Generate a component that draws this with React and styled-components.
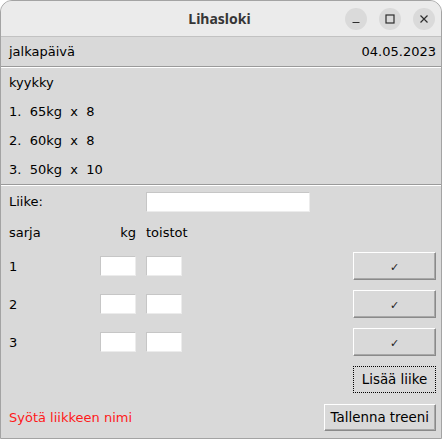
import React from "react";
import styled, { createGlobalStyle } from "styled-components";

const GlobalStyle = createGlobalStyle`
  html, body { margin: 0; padding: 0; background: #ffffff; }
  body { font-family: "DejaVu Sans", "Liberation Sans", sans-serif; }
  * { box-sizing: border-box; }
`;

const Window = styled.div`
  width: 442px;
  height: 439px;
  border: 1px solid #a3a3a3;
  border-radius: 12px 12px 0 0;
  overflow: hidden;
  background: #d9d9d9;
  display: flex;
  flex-direction: column;
  color: #000;
  font-size: 13px;
`;

const TitleBar = styled.div`
  height: 36px;
  flex: none;
  background: #ebebeb;
  border-bottom: 1px solid #c2c2c2;
  display: grid;
  grid-template-columns: 1fr auto 1fr;
  align-items: center;
  padding: 0 6px 0 0;
`;

const Title = styled.div`
  grid-column: 2;
  font-family: "Noto Sans", "DejaVu Sans", sans-serif;
  font-weight: 700;
  font-size: 14px;
  color: #363636;
  padding-left: 3px;
`;

const Controls = styled.div`
  grid-column: 3;
  justify-self: end;
  display: flex;
  gap: 12px;
`;

const CtrlButton = styled.div`
  width: 22px;
  height: 22px;
  border-radius: 50%;
  background: #dadada;
  display: flex;
  align-items: center;
  justify-content: center;
  color: #2e2e2e;
`;

const HeaderRow = styled.div`
  height: 29px;
  flex: none;
  display: flex;
  align-items: center;
  justify-content: space-between;
  padding: 0 5px 1px 8px;
`;

const Separator = styled.div`
  height: 2px;
  flex: none;
  border-top: 1px solid #9a9a9a;
  border-bottom: 1px solid #ffffff;
`;

const List = styled.div`
  flex: none;
  display: flex;
  flex-direction: column;
  padding: 0 8px;
`;

const ListRow = styled.div`
  height: 29px;
  display: flex;
  align-items: center;
  white-space: pre;
`;

const Form = styled.div`
  flex: 1;
  display: grid;
  grid-template-columns: 81px 36px 36px 1fr 83px;
  grid-template-rows: 31px 30px 38px 38px 38px 36px 1fr;
  column-gap: 10px;
  align-items: center;
  padding: 0 5px 0 8px;
`;

const Label = styled.div`
  grid-column: ${(p) => p.$col || "1"};
  justify-self: ${(p) => p.$align || "start"};
  color: ${(p) => p.$color || "#000"};
  white-space: nowrap;
`;

const Entry = styled.input`
  grid-column: ${(p) => p.$col};
  width: ${(p) => p.$width || "36px"};
  height: 20px;
  background: #ffffff;
  border: 1px solid;
  border-color: #c6c6c6 #ececec #ececec #c6c6c6;
  outline: none;
  padding: 0 2px;
  font: inherit;
`;

const Button = styled.button`
  grid-column: 5;
  justify-self: ${(p) => (p.$wide ? "end" : "stretch")};
  height: ${(p) => p.$h || 28}px;
  padding: 0 6px;
  background: #d9d9d9;
  font-family: "DejaVu Sans", sans-serif;
  font-size: 13.4px;
  color: #000;
  border: 1px solid;
  border-color: ${(p) =>
    p.$focus ? "#000" : "#ffffff #8a8a8a #8a8a8a #ffffff"};
  border-style: ${(p) => (p.$focus ? "dotted" : "solid")};
  box-shadow: ${(p) =>
    p.$focus ? "none" : "inset -1px -1px 0 #a8a8a8"};
  white-space: nowrap;
  cursor: default;
`;

const Check = styled.span`
  font-size: 11px;
  line-height: 1;
  color: #1c1c1c;
`;

function MinIcon() {
  return (
    <svg width="10" height="10" viewBox="0 0 10 10">
      <line x1="1.5" y1="8.5" x2="8.5" y2="8.5" stroke="currentColor" strokeWidth="1.2" />
    </svg>
  );
}
function MaxIcon() {
  return (
    <svg width="10" height="10" viewBox="0 0 10 10">
      <rect x="1" y="1" width="8" height="8" fill="none" stroke="currentColor" strokeWidth="1.2" />
    </svg>
  );
}
function CloseIcon() {
  return (
    <svg width="10" height="10" viewBox="0 0 10 10">
      <path d="M1.5 1.5 L8.5 8.5 M8.5 1.5 L1.5 8.5" stroke="currentColor" strokeWidth="1.2" />
    </svg>
  );
}

const sets = ["1.  65kg  x  8", "2.  60kg  x  8", "3.  50kg  x  10"];

export default function App() {
  return (
    <>
      <GlobalStyle />
      <Window>
        <TitleBar>
          <Title>Lihasloki</Title>
          <Controls>
            <CtrlButton><MinIcon /></CtrlButton>
            <CtrlButton><MaxIcon /></CtrlButton>
            <CtrlButton><CloseIcon /></CtrlButton>
          </Controls>
        </TitleBar>
        <HeaderRow>
          <span>jalkapäivä</span>
          <span>04.05.2023</span>
        </HeaderRow>
        <Separator />
        <List>
          <ListRow>kyykky</ListRow>
          {sets.map((s) => (
            <ListRow key={s}>{s}</ListRow>
          ))}
        </List>
        <Separator />
        <Form>
          <Label>Liike:</Label>
          <Entry $col="3 / 5" $width="164px" />

          <Label>sarja</Label>
          <Label $col="2" $align="end">kg</Label>
          <Label $col="3 / 5">toistot</Label>

          {[1, 2, 3].map((n) => (
            <React.Fragment key={n}>
              <Label>{n}</Label>
              <Entry $col="2" />
              <Entry $col="3" />
              <Button><Check>✓</Check></Button>
            </React.Fragment>
          ))}

          <Button $focus $h={27}>Lisää liike</Button>

          <Label $col="1 / 5" $color="#ff1a1a">Syötä liikkeen nimi</Label>
          <Button $wide $h={27}>Tallenna treeni</Button>
        </Form>
      </Window>
    </>
  );
}
